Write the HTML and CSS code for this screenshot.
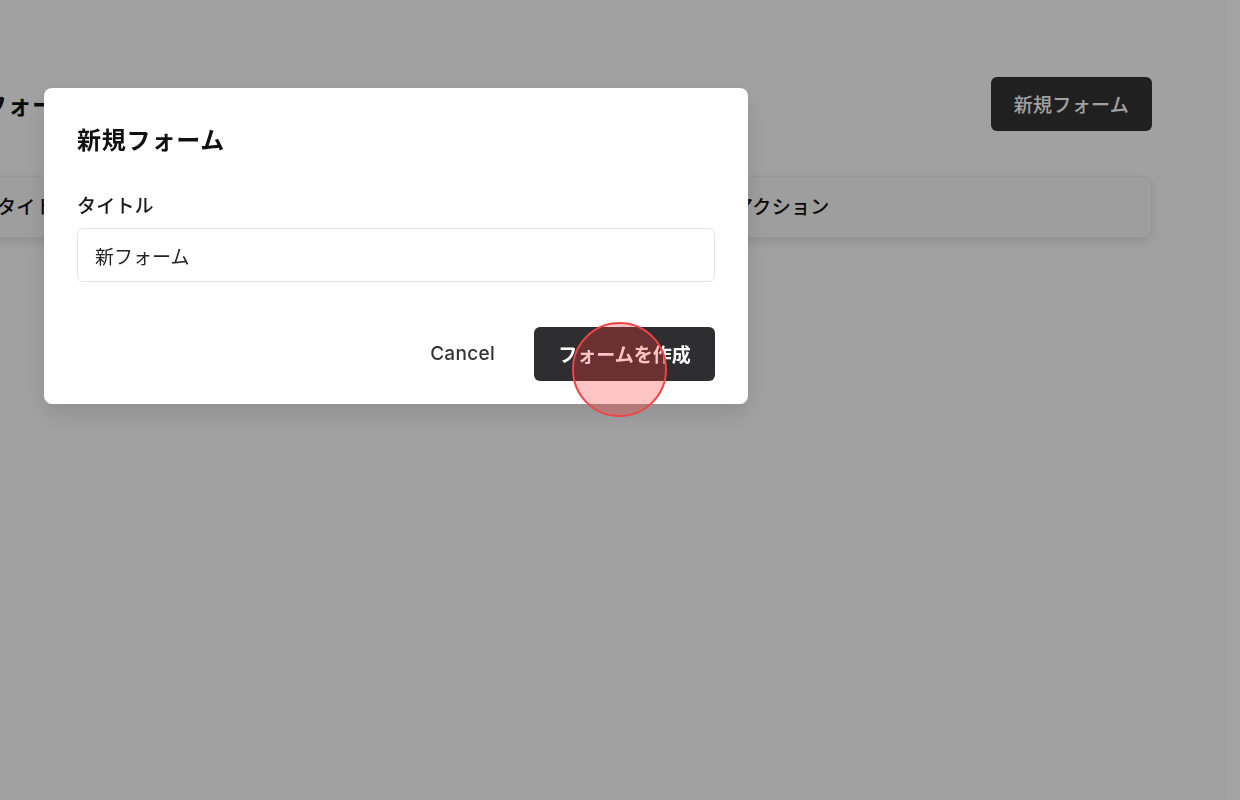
FILE: index.html
```html
<!DOCTYPE html>
<html lang="ja">
<head>
<meta charset="utf-8">
<title>フォーム一覧</title>
<link rel="stylesheet" href="styles.css">
</head>
<body>
<div class="app">
  <main class="page">
    <header class="page-header">
      <h1 class="page-title">フォーム一覧</h1>
      <button class="btn btn-dark">新規フォーム</button>
    </header>
    <div class="table-card">
      <div class="table-head">
        <div class="th">タイトル</div>
        <div class="th">回答数</div>
        <div class="th">アクション</div>
      </div>
    </div>
  </main>
  <div class="gutter"></div>
</div>

<div class="overlay"></div>

<div class="modal" role="dialog">
  <h2 class="modal-title">新規フォーム</h2>
  <label class="field-label" for="title">タイトル</label>
  <input class="field-input" id="title" type="text" value="新フォーム">
  <div class="modal-footer">
    <button class="btn btn-ghost">Cancel</button>
    <button class="btn btn-primary">フォームを作成</button>
  </div>
</div>

<div class="click-marker"></div>
</body>
</html>
```

FILE: styles.css
```css
* { box-sizing: border-box; }

html, body {
  margin: 0;
  height: 100%;
  overflow: hidden;
}

body {
  background: #ffffff;
  font-family: "Noto Sans CJK JP", "Noto Sans", sans-serif;
  color: #111111;
}

.app {
  display: flex;
  height: 800px;
}

.page {
  flex: 1;
  padding-top: 77px;
  margin-left: -21px;
  padding-right: 74px;
}

.gutter {
  width: 14px;
  background: #a4a4a4;
  position: relative;
  z-index: 20;
}

.page-header {
  display: flex;
  align-items: center;
  justify-content: space-between;
  height: 54px;
}

.page-title {
  margin: 0 0 0 4px;
  font-size: 24px;
  font-weight: 700;
  line-height: 32px;
  letter-spacing: 0.5px;
}

.btn {
  font-family: "Noto Sans CJK JP", sans-serif;
  border: 0;
  border-radius: 6px;
  cursor: pointer;
  font-size: 19px;
  line-height: 28px;
}

.btn-dark {
  background: #333333;
  color: #ffffff;
  height: 54px;
  padding: 0 23px;
  font-weight: 500;
  letter-spacing: 0.3px;
}

.table-card {
  margin-top: 45px;
  border: 1px solid #eeeeee;
  border-radius: 9px;
  background: #fbfbfb;
  box-shadow: 0 4px 10px rgba(0, 0, 0, 0.10);
}

.table-head {
  display: grid;
  grid-template-columns: 370px 367px 1fr;
  height: 60px;
  align-items: center;
  padding: 0 0 3px 17px;
}

.th {
  font-size: 19px;
  font-weight: 500;
  color: #111111;
  letter-spacing: 0.3px;
}

.overlay {
  position: fixed;
  top: 0;
  left: 0;
  bottom: 0;
  right: 14px;
  background: rgba(0, 0, 0, 0.37);
  z-index: 10;
}

.modal {
  position: fixed;
  left: 44px;
  top: 88px;
  width: 704px;
  background: #ffffff;
  border-radius: 8px;
  padding: 33px 33px 23px;
  z-index: 30;
  box-shadow: 0 10px 25px rgba(0, 0, 0, 0.12);
  display: flex;
  flex-direction: column;
}

.modal-title {
  margin: 0;
  font-size: 24px;
  font-weight: 700;
  line-height: 36px;
  letter-spacing: 0.8px;
  color: #111111;
}

.field-label {
  margin-top: 34px;
  font-size: 19px;
  font-weight: 500;
  line-height: 28px;
  letter-spacing: 0.2px;
  color: #1a1a1a;
}

.field-input {
  margin-top: 9px;
  height: 54px;
  border: 1px solid #e4e4e4;
  border-radius: 6px;
  padding: 0 17px;
  font-family: "Noto Sans CJK JP", sans-serif;
  font-size: 19px;
  color: #222222;
  outline: none;
  background: #ffffff;
}

.modal-footer {
  margin-top: 45px;
  display: flex;
  justify-content: flex-end;
  gap: 20px;
}

.btn-ghost {
  background: transparent;
  color: #333333;
  height: 54px;
  padding: 0 19px;
  font-family: "Inter", "Noto Sans", sans-serif;
  font-weight: 500;
  font-size: 19px;
  letter-spacing: 0.3px;
}

.btn-primary {
  background: #2e2e30;
  color: #ffffff;
  width: 181px;
  height: 54px;
  padding: 0;
  font-weight: 700;
}

.click-marker {
  position: fixed;
  left: 572px;
  top: 322px;
  width: 95px;
  height: 95px;
  border-radius: 50%;
  border: 2.5px solid #ef4444;
  background: rgba(255, 55, 55, 0.29);
  z-index: 40;
  pointer-events: none;
}
```
